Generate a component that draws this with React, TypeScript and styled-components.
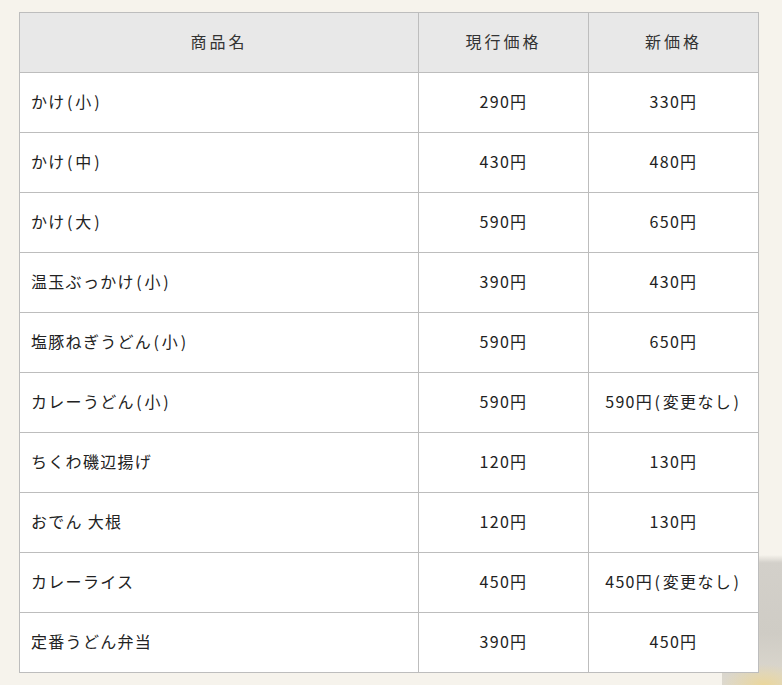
import React from "react";
import styled, { createGlobalStyle } from "styled-components";

const Global = createGlobalStyle`
  html, body { margin: 0; padding: 0; }
  body {
    background: #f6f3ec;
    font-family: "Noto Sans CJK JP", "Noto Sans", sans-serif;
    color: #222;
    overflow: hidden;
  }
`;

const Page = styled.div`
  position: relative;
  width: 782px;
  height: 685px;
  padding: 12px 0 0 19px;
  box-sizing: border-box;
`;

const Photo = styled.div`
  position: absolute;
  right: 0;
  bottom: 0;
  width: 60px;
  height: 130px;
  background:
    radial-gradient(ellipse 60px 30px at 70% 100%, rgba(236, 214, 150, 0.9), rgba(236, 214, 150, 0) 70%),
    linear-gradient(180deg, rgba(205, 202, 196, 0) 0%, #d3d0ca 6%, #cfccc5 60%, #ddd9cf 100%);
  border-radius: 40px 0 0 0;
`;

const Table = styled.table`
  position: relative;
  border-collapse: collapse;
  width: 739px;
  table-layout: fixed;
  background: #fff;
  font-size: 16px;
  letter-spacing: 1.3px;
`;

const HeadCell = styled.th`
  box-sizing: border-box;
  height: 60px;
  background: #e8e8e8;
  border: 1px solid #bdbdbd;
  font-weight: 400;
  color: #333;
  text-align: center;
  letter-spacing: 3px;
  padding: 0 12px 4px;
`;

const Cell = styled.td<{ $align?: "left" | "center" }>`
  box-sizing: border-box;
  height: 60px;
  border: 1px solid #bdbdbd;
  text-align: ${(p) => p.$align ?? "center"};
  padding: 0 11px 4px;
  color: #222;
`;

const Paren = styled.span`
  padding: 0 1.5px;
`;

function withParens(text: string) {
  return text.split(/([()])/).map((part, i) =>
    part === "(" || part === ")" ? <Paren key={i}>{part}</Paren> : part
  );
}

const rows: [string, string, string][] = [
  ["かけ(小)", "290円", "330円"],
  ["かけ(中)", "430円", "480円"],
  ["かけ(大)", "590円", "650円"],
  ["温玉ぶっかけ(小)", "390円", "430円"],
  ["塩豚ねぎうどん(小)", "590円", "650円"],
  ["カレーうどん(小)", "590円", "590円(変更なし)"],
  ["ちくわ磯辺揚げ", "120円", "130円"],
  ["おでん 大根", "120円", "130円"],
  ["カレーライス", "450円", "450円(変更なし)"],
  ["定番うどん弁当", "390円", "450円"],
];

export default function App() {
  return (
    <>
      <Global />
      <Page>
        <Photo />
        <Table>
          <colgroup>
            <col style={{ width: 399 }} />
            <col style={{ width: 170 }} />
            <col style={{ width: 170 }} />
          </colgroup>
          <thead>
            <tr>
              <HeadCell>商品名</HeadCell>
              <HeadCell>現行価格</HeadCell>
              <HeadCell>新価格</HeadCell>
            </tr>
          </thead>
          <tbody>
            {rows.map(([name, cur, next]) => (
              <tr key={name}>
                <Cell $align="left">{withParens(name)}</Cell>
                <Cell>{cur}</Cell>
                <Cell>{withParens(next)}</Cell>
              </tr>
            ))}
          </tbody>
        </Table>
      </Page>
    </>
  );
}
